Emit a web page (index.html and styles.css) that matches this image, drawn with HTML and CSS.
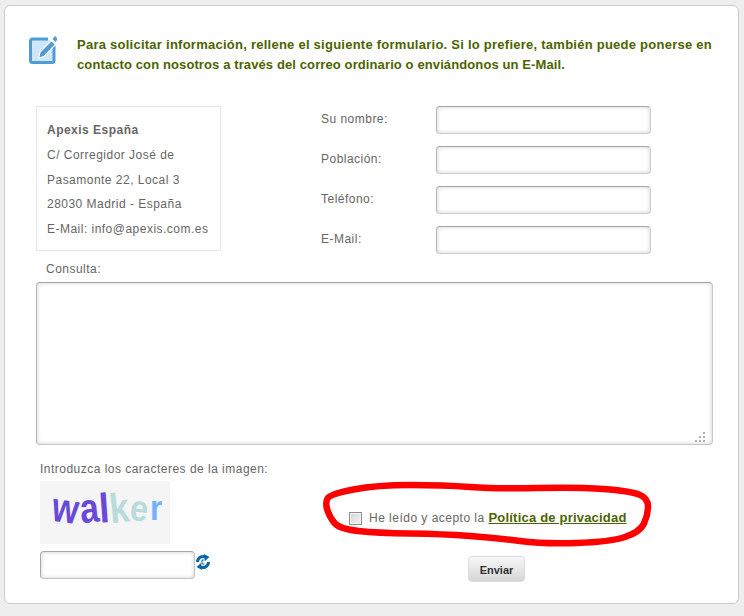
FILE: index.html
```html
<!DOCTYPE html>
<html lang="es">
<head>
<meta charset="utf-8">
<title>Formulario de contacto</title>
<link rel="stylesheet" href="styles.css">
</head>
<body>
<main class="card">
  <header class="intro">
    <svg class="intro-icon" width="28" height="29" viewBox="0 0 28 29" aria-hidden="true">
      <path d="M19 4 H3.5 A2 2 0 0 0 1.5 6 V25.5 A2 2 0 0 0 3.5 27.5 H23 A2 2 0 0 0 25 25.5 V10" fill="#cfe5fb" stroke="#4f9bd4" stroke-width="3"/>
      <path d="M9.5 23 L11 17 L22.5 5.5 L26.5 9.5 L15 21.5 Z" fill="#4f9bd4" stroke="#ffffff" stroke-width="1.2"/>
      <path d="M23.5 4 L26 1 L28 3 L28 5 L26.5 7 Z" fill="#4f9bd4"/>
    </svg>
    <p class="intro-text"><span class="line-a">Para solicitar información, rellene el siguiente formulario. Si lo prefiere, también puede ponerse en</span> <span class="line-b">contacto con nosotros a través del correo ordinario o enviándonos un E-Mail.</span></p>
  </header>

  <section class="top">
    <address class="addr">
      <strong>Apexis España</strong><br>
      C/ Corregidor José de<br>
      Pasamonte 22, Local 3<br>
      28030 Madrid - España<br>
      E-Mail: info@apexis.com.es
    </address>
    <div class="fields">
      <label class="field"><span class="field-label">Su nombre:</span><input class="input input-wide" type="text"></label>
      <label class="field"><span class="field-label">Población:</span><input class="input input-wide" type="text"></label>
      <label class="field"><span class="field-label">Teléfono:</span><input class="input input-wide" type="text"></label>
      <label class="field"><span class="field-label">E-Mail:</span><input class="input input-wide" type="text"></label>
    </div>
  </section>

  <label class="consulta-label" for="consulta">Consulta:</label>
  <div class="consulta-wrap">
    <textarea class="consulta" id="consulta"></textarea>
    <svg class="grip" width="10" height="10" viewBox="0 0 10 10" aria-hidden="true">
      <path d="M0 8h2v2H0zM4 8h2v2H4zM8 8h2v2H8zM4 4h2v2H4zM8 4h2v2H8zM8 0h2v2H8z" fill="#b0b0b0"/>
    </svg>
  </div>

  <section class="bottom">
    <div class="captcha-col">
      <p class="captcha-label">Introduzca los caracteres de la imagen:</p>
      <div class="captcha-img"><span class="c1">w</span><span class="c2">a</span><span class="c3">l</span><span class="c4">k</span><span class="c5">e</span><span class="c6">r</span></div>
      <div class="captcha-row">
        <input class="input input-captcha" type="text">
        <svg class="refresh" width="16" height="18" viewBox="0 0 16 18" aria-hidden="true">
          <path d="M2.5 9 A5.5 5.5 0 0 1 11 4.4" fill="none" stroke="#0a66a8" stroke-width="3"/>
          <path d="M13.5 9 A5.5 5.5 0 0 1 5 13.6" fill="none" stroke="#0a66a8" stroke-width="3"/>
          <path d="M9 1 L14.5 4 L10 8 Z M7 17 L1.5 14 L6 10 Z" fill="#0a66a8"/>
          <path d="M9.5 7 H7 V11 H9.5" fill="none" stroke="#0a66a8" stroke-width="1"/>
        </svg>
      </div>
    </div>
    <div class="send-col">
      <label class="accept"><span class="check"></span>He leído y acepto la <a class="policy" href="#">Política de privacidad</a></label>
      <button class="send" type="button">Enviar</button>
    </div>
  </section>

  <svg class="scribble" width="344" height="72" viewBox="0 0 344 72" aria-hidden="true">
    <path d="M7.5 18.5 Q10 14 33.5 9.5 Q57 5 90 5 Q123 5 150 7 Q177 9 217 8 Q257 7 283.5 9 Q310 11 319 14.5 Q328 18 328 26.5 Q328 35 324 43.5 Q320 52 305 57 Q290 62 256.5 63 Q223 64 200 61 Q177 58 150 56 Q123 54 90 53.5 Q57 53 38.5 51 Q20 49 15 43.5 Q10 38 7.5 30.5 Q5 23 7.5 18.5 Z" fill="none" stroke="#fe0000" stroke-width="6.5" stroke-linejoin="round"/>
  </svg>
</main>
</body>
</html>
```

FILE: styles.css
```css
* { box-sizing: border-box; }
html, body { margin: 0; height: 100%; }
body {
  background: #eeeeee;
  font-family: "Liberation Sans", Arial, sans-serif;
  font-size: 12px;
  letter-spacing: 0.48px;
  color: #666666;
  overflow: hidden;
}
.card {
  position: relative;
  width: 735px;
  height: 599px;
  margin: 5px 0 0 4px;
  padding: 29px 24px 0 31px;
  background: #ffffff;
  border: 1px solid #cccccc;
  border-radius: 6px;
}
.intro { display: flex; align-items: flex-start; margin-left: -7px; }
.intro-icon { flex: none; margin: 0 20px 0 0; }
.intro-text {
  margin: 0;
  width: 645px;
  font-size: 13px;
  font-weight: bold;
  line-height: 20px;
  color: #4c6400;
}
.line-a, .line-b { display: block; white-space: nowrap; }
.line-a { letter-spacing: 0.25px; }
.line-b { letter-spacing: 0.11px; }
.top { display: flex; margin-top: 31px; }
.addr {
  flex: none;
  width: 185px;
  height: 145px;
  padding: 11px 10px 0;
  border: 1px solid #e6e6e6;
  font-style: normal;
  line-height: 24.8px;
}
.fields { margin-left: 100px; display: flex; flex-direction: column; gap: 12px; }
.field { display: flex; align-items: center; }
.field-label { width: 115px; padding-bottom: 3px; }
.input {
  display: block;
  height: 28px;
  background: #ffffff;
  border: 1px solid #cccccc;
  border-top-color: #a5a5a5;
  border-left-color: #b5b5b5;
  border-radius: 4px;
  box-shadow: inset 0 0 4px #d0d0d0;
  outline: none;
}
.input-wide { width: 215px; }
.input-captcha { width: 155px; border-color: #a8a8a8; border-bottom-color: #c4c4c4; border-right-color: #c4c4c4; }
.consulta-label { display: block; margin: 8px 0 0 10px; line-height: 14px; }
.consulta-wrap { position: relative; width: 677px; margin-top: 6px; }
.consulta {
  display: block;
  width: 677px;
  height: 163px;
  background: #ffffff;
  border: 1px solid #c8c8c8;
  border-top-color: #a5a5a5;
  border-left-color: #b5b5b5;
  border-radius: 4px;
  box-shadow: inset 0 0 4px #d0d0d0;
  outline: none;
  resize: none;
}
.grip { position: absolute; right: 8px; bottom: 3px; }
.bottom { display: flex; margin-top: 17px; margin-left: 4px; }
.captcha-col { flex: none; width: 309px; }
.captcha-label { margin: 0; line-height: 14px; }
.captcha-img {
  display: flex;
  align-items: baseline;
  justify-content: center;
  width: 130px;
  height: 63px;
  margin-top: 5px;
  padding: 6px 0 0 4px;
  background: #f5f5f5;
  font-size: 37px;
  font-weight: bold;
  line-height: 44px;
  letter-spacing: -0.5px;
}
.c1 { color: #6b49d8; transform: rotate(8deg) scale(0.92, 1.12); }
.c2 { color: #6b49d8; transform: rotate(-6deg) scale(0.92, 1.12); }
.c3 { color: #6b49d8; transform: rotate(-4deg) scaleY(1.12); }
.c4 { color: #b8dcdc; transform: rotate(-6deg) scale(0.95, 1.12); }
.c5 { color: #b8dcdc; transform: rotate(6deg) scale(0.88, 0.98); }
.c6 { color: #74b3fb; transform: scale(0.85, 0.95); }
.captcha-row { display: flex; align-items: flex-start; margin-top: 7px; }
.refresh { margin-top: 2px; }
.send-col { display: flex; flex-direction: column; align-items: flex-start; padding-top: 48px; }
.accept { display: flex; align-items: center; line-height: 16px; white-space: pre-wrap; }
.check {
  flex: none;
  width: 13px;
  height: 13px;
  margin-right: 7px;
  border: 1px solid #8e8e8e;
  background: linear-gradient(135deg, #d4d4d8, #f4f4f6);
  box-shadow: inset 0 0 0 1px #f2f2f2;
}
.policy { font-size: 13px; font-weight: bold; color: #4c6400; letter-spacing: 0.2px; }
.send {
  width: 57px;
  height: 26px;
  margin: 30px 0 0 119px;
  padding: 1px 0 0;
  border: 1px solid #dcdcdc;
  border-radius: 4px;
  background: linear-gradient(#f8f8f8, #d6d6d6);
  font-family: "Liberation Sans", Arial, sans-serif;
  font-size: 11px;
  font-weight: bold;
  letter-spacing: 0;
  color: #333333;
}
.scribble { position: absolute; left: 315px; top: 474px; pointer-events: none; }
```
